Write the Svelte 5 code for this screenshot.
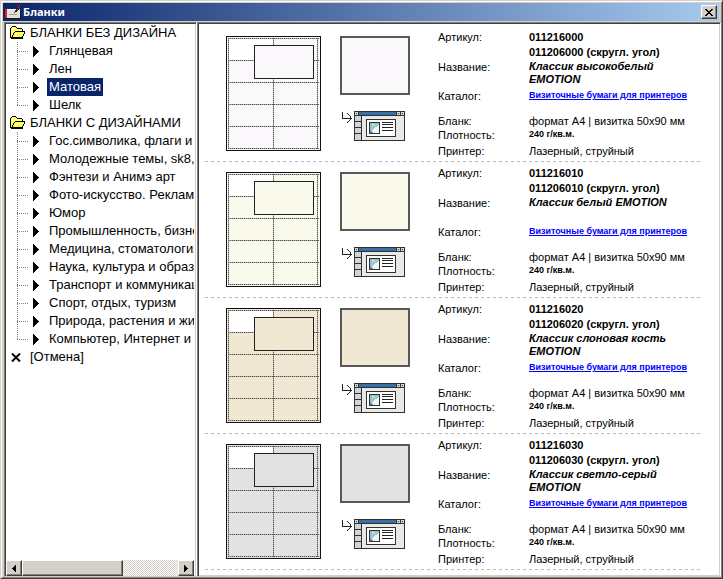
<script>
  const groups = [
    { title: 'БЛАНКИ БЕЗ ДИЗАЙНА', items: ['Глянцевая', 'Лен', 'Матовая', 'Шелк'] },
    {
      title: 'БЛАНКИ С ДИЗАЙНАМИ',
      items: [
        'Гос.символика, флаги и',
        'Молодежные темы, sk8,',
        'Фэнтези и Анимэ арт',
        'Фото-искусство. Реклам',
        'Юмор',
        'Промышленность, бизне',
        'Медицина, стоматология',
        'Наука, культура и образ',
        'Транспорт и коммуникац',
        'Спорт, отдых, туризм',
        'Природа, растения и жи',
        'Компьютер, Интернет и I'
      ]
    }
  ];
  let selected = $state('Матовая');

  const papers = [
    { code: '011216000', round: '011206000', name: 'Классик высокобелый EMOTION', color: '#faf8fa' },
    { code: '011216010', round: '011206010', name: 'Классик белый EMOTION', color: '#f9f9ec' },
    { code: '011216020', round: '011206020', name: 'Классик слоновая кость EMOTION', color: '#f0e8d2' },
    { code: '011216030', round: '011206030', name: 'Классик светло-серый EMOTION', color: '#e2e2e2' }
  ];
  const rowLines = [2, 24, 46, 68, 90, 112];
  const colLines = [3, 48, 92];
</script>

<div class="window">
  <header>
    <svg class="app" width="16" height="16" viewBox="0 0 16 16" shape-rendering="crispEdges">
      <path d="M2 5h13v9H2z" fill="#e4e0dc" />
      <path d="M2 5h12v1H2z" fill="#fff" />
      <path d="M1 14h14v1H1zM15 6h1v9h-1z" fill="#181818" />
      <path d="M0 5h2v9H0z" fill="#e81818" />
      <path d="M4 10h8v1H4z" fill="#a09c98" />
      <path d="M9 8h1V6h1V4h1V3h1V2h1V1h2v2h-1v2h-1v1h-1v1h-1v1h-2v1H9z" fill="#282020" />
      <path d="M14 1h1v1h-1zM13 3h1v1h-1zM12 5h1v1h-1z" fill="#d05050" />
    </svg>
    <h1>Бланки</h1>
    <button class="close" aria-label="Закрыть">
      <svg width="8" height="7" viewBox="0 0 8 7" shape-rendering="crispEdges">
        <path d="M0 0h2v1h1v1h2V1h1V0h2v1H7v1H6v1H5v1h1v1h1v1h1v1H6V6H5V5H3v1H2v1H0V6h1V5h1V4h1V3H2V2H1V1H0z" />
      </svg>
    </button>
  </header>

  <div class="panes">
    <nav class="pane side">
      <div class="tree">
        {#each groups as group}
          <div class="row">
            <svg class="folder" width="16" height="14" viewBox="0 0 16 14" shape-rendering="crispEdges">
              <path d="M1 12V2h1V1h4v1h1v1h6v3h2v1h-1v2h-1v2h-1v1z" fill="#ffff50" />
              <path d="M2 2h3v1H2zM2 3h1v5H2zM5 7h8v1H5z" fill="#ffffd8" />
              <path d="M2 0h4v1H2zM1 1h1v1H1zM0 2h1v10H0zM6 1h1v1H6zM7 2h5v1H7zM12 3h1v2h-1zM5 5h10v1H5zM14 6h1v2h-1zM13 8h1v2h-1zM12 10h1v2h-1zM0 11h13v2H1v-1H0zM4 6h1v1H4zM3 7h1v2H3zM2 9h1v2H2z" />
            </svg>
            <span>{group.title}</span>
          </div>
          <ul>
            {#each group.items as item}
              <li>
                <svg class="arrow" width="6" height="11" viewBox="0 0 6 11" shape-rendering="crispEdges">
                  <path d="M0 0h1v1h1v1h1v1h1v1h1v1h1v1H5v1H4v1H3v1H2v1H1v1H0z" />
                </svg>
                <button class:selected={selected === item} onclick={() => (selected = item)}>{item}</button>
              </li>
            {/each}
          </ul>
        {/each}
        <div class="row">
          <svg class="cross" width="10" height="9" viewBox="0 0 10 9">
            <path d="M1 0.5l8 8M9 0.5l-8 8" stroke="#000" stroke-width="2" />
          </svg>
          <button>[Отмена]</button>
        </div>
      </div>
      <div class="scroll">
        <button aria-label="Влево"><svg width="4" height="7" viewBox="0 0 4 7" shape-rendering="crispEdges"><path d="M3 0h1v7H3V6H2V5H1V4H0V3h1V2h1V1h1z" /></svg></button>
        <div class="thumb"></div>
        <div class="track"></div>
        <button aria-label="Вправо"><svg width="4" height="7" viewBox="0 0 4 7" shape-rendering="crispEdges"><path d="M0 0h1v1h1v1h1v1h1v1H3v1H2v1H1v1H0z" /></svg></button>
      </div>
    </nav>

    <main class="pane">
      {#each papers as paper}
        <article>
          <svg class="sheet" width="95" height="115" viewBox="0 0 95 115">
            <rect x="0.5" y="0.5" width="94" height="114" fill={paper.color} stroke="#111" />
            <rect x="3" y="3" width="44" height="21" fill="#fff" />
            <g fill="none" stroke="#aaa">
              {#each rowLines as y}<path d="M2 {y + 0.5}H93" />{/each}
              {#each colLines as x}<path d="M{x - 0.5} 2V113" />{/each}
            </g>
            <g fill="none" stroke="#555" stroke-dasharray="1 1">
              {#each rowLines as y}<path d="M2 {y + 0.5}H93" />{/each}
              {#each colLines as x}<path d="M{x - 0.5} 2V113" />{/each}
            </g>
            <rect x="28.5" y="9.5" width="59" height="33" fill={paper.color} stroke="#222" />
          </svg>
          <div class="views">
            <div class="swatch" style:background={paper.color}></div>
            <svg width="70" height="31" viewBox="0 0 70 31" shape-rendering="crispEdges">
              <path d="M2 1h1v6h7v1H2zM7 2h1v1H7zM8 3h1v1H8zM9 4h1v1H9zM10 5h1v1h-1zM11 7h1v1h-1zM10 6h1v3h-1zM9 9h1v1H9zM8 10h1v1H8zM7 11h1v1H7z" fill="#222" />
              <path d="M14 0h51v30H14z" fill="#303030" />
              <path d="M22 5h42v24H22z" fill="#e8e8e6" />
              <path d="M15 1h3v3h-3zM57 1h3v3h-3zM61 1h3v3h-3z" fill="#e0dcd4" />
              <path d="M16 2h1v1h-1zM58 2h1v1h-1zM62 2h1v1h-1z" fill="#222" />
              <path d="M19 1h37v3H19z" fill="#3a6ea5" />
              <path d="M15 5h6v5h-6zM15 11h6v5h-6zM15 17h6v5h-6zM15 23h6v6h-6z" fill="#d4d4d4" />
              <path d="M26 8h30v18H26z" fill="#303030" />
              <path d="M27 9h28v16H27z" fill="#fff" />
              <path d="M29 11h11v12H29z" fill="#303030" />
              <path d="M30 12h9v10h-9z" fill="#8cc6ec" />
              <path d="M39 14v8h-9v-1h1v-1h1v-1h1v-1h1v-1h1v-1h2v-1h1v-1z" fill="#f4f4f4" />
              <path d="M32 13h3v2h-3z" fill="#f6e820" />
              <path d="M30 19h1v1h1v1h1v1h-3z" fill="#888" />
              <path d="M42 11h11v1H42zM42 13h11v1H42zM42 16h11v1H42zM42 19h11v1H42z" fill="#222" />
            </svg>
          </div>
          <dl>
            <dt>Артикул:</dt>
            <dd class="code">{paper.code}<br />{paper.round} (скругл. угол)</dd>
            <dt>Название:</dt>
            <dd class="name">{paper.name}</dd>
            <dt>Каталог:</dt>
            <dd><a href="#catalog">Визиточные бумаги для принтеров</a></dd>
            <dt>Бланк:</dt>
            <dd>формат А4 | визитка 50x90 мм</dd>
            <dt>Плотность:</dt>
            <dd class="weight">240 г/кв.м.</dd>
            <dt>Принтер:</dt>
            <dd>Лазерный, струйный</dd>
          </dl>
        </article>
      {/each}
    </main>
  </div>
</div>

<style>
  :global(body) {
    margin: 0;
  }
  .window {
    box-sizing: border-box;
    height: 100vh;
    display: flex;
    flex-direction: column;
    padding: 2px 1px 1px 2px;
    background: #d4d0c8;
    border: 1px solid;
    border-color: #d4d0c8 #404040 #404040 #d4d0c8;
    box-shadow: inset 1px 1px #fff, inset -1px -1px #808080;
    font-family: 'Liberation Sans', Arial, sans-serif;
    color: #000;
  }
  button {
    margin: 0;
    padding: 0;
    border: 0;
    background: none;
    color: inherit;
    font: inherit;
  }
  header {
    flex: none;
    display: flex;
    align-items: center;
    height: 18px;
    margin-right: 2px;
    padding: 0 2px;
    background: linear-gradient(90deg, #0a246a, #a6caf0);
  }
  h1 {
    flex: 1;
    margin: 0 0 0 2px;
    font: bold 11px 'Noto Sans', Tahoma, sans-serif;
    line-height: 16px;
    color: #fff;
  }
  .close,
  .scroll button,
  .thumb {
    box-sizing: border-box;
    background: #d4d0c8;
    border: 1px solid;
    border-color: #fff #404040 #404040 #fff;
    box-shadow: inset -1px -1px #808080;
  }
  .close {
    display: flex;
    align-items: center;
    justify-content: center;
    width: 16px;
    height: 14px;
  }
  .panes {
    flex: 1;
    min-height: 0;
    display: flex;
    padding: 1px 0 0 1px;
  }
  .pane {
    flex: 1;
    min-width: 0;
    box-sizing: border-box;
    background: #fff;
    border: 1px solid;
    border-color: #808080 #fff #d4d0c8 #808080;
    box-shadow: inset 1px 1px #404040, inset -1px -1px #d4d0c8;
    overflow: hidden;
  }
  .side {
    flex: 0 0 193px;
    display: flex;
    flex-direction: column;
    padding: 1px 2px 0 1px;
    font-size: 13px;
    line-height: 18px;
  }
  .tree {
    flex: 1;
    min-height: 0;
    overflow: hidden;
    white-space: nowrap;
  }
  .row {
    display: flex;
    align-items: center;
    height: 18px;
    padding-left: 4px;
  }
  .folder {
    margin-right: 4px;
  }
  .cross {
    margin: 0 9px 0 1px;
  }
  ul {
    margin: 0;
    padding: 0 0 0 11px;
    list-style: none;
  }
  li {
    display: flex;
    align-items: center;
    height: 18px;
    background:
      repeating-linear-gradient(90deg, #808080 0 1px, transparent 1px 2px) 0 9px / 11px 1px no-repeat,
      repeating-linear-gradient(#808080 0 1px, transparent 1px 2px) 0 0 / 1px 18px no-repeat;
  }
  li:last-child {
    background-size: 11px 1px, 1px 10px;
  }
  .arrow {
    flex: none;
    margin: 0 8px 0 16px;
  }
  li button {
    height: 18px;
    padding: 0 2px;
  }
  .selected {
    background: #0a246a;
    color: #fff;
  }
  .scroll {
    flex: none;
    display: flex;
    height: 16px;
  }
  .scroll button {
    flex: none;
    width: 16px;
    display: flex;
    align-items: center;
    justify-content: center;
  }
  .thumb {
    width: 101px;
  }
  .track {
    flex: 1;
    background: repeating-conic-gradient(#d4d0c8 0 25%, #fff 0 50%) 0 0 / 2px 2px;
  }
  main.pane {
    padding: 3px 20px 0 7px;
    font-size: 11px;
  }
  article {
    box-sizing: border-box;
    display: flex;
    height: 136px;
    padding-left: 21px;
    background: repeating-linear-gradient(90deg, #bbb 0 3px, transparent 3px 6px) 0 100% / 100% 1px no-repeat;
  }
  .sheet {
    flex: none;
    margin-top: 10px;
  }
  .views {
    flex: none;
    display: flex;
    flex-direction: column;
    gap: 16px;
    width: 70px;
    margin: 10px 28px 0 19px;
  }
  .swatch {
    box-sizing: border-box;
    height: 59px;
    border: 2px solid #58585a;
  }
  dl {
    flex: 1;
    display: grid;
    grid-template: 30px 29px 25px 14px 16px 14px / 91px 1fr;
    margin: 4px 0 0;
    line-height: 14px;
  }
  dt,
  dd {
    margin: 0;
  }
  .code,
  .name {
    font-weight: bold;
  }
  .code {
    line-height: 15px;
  }
  .name {
    max-width: 150px;
    line-height: 13px;
    font-style: italic;
  }
  a,
  .weight {
    font-size: 9px;
    font-weight: bold;
    line-height: 13px;
  }
  dd a {
    display: block;
    color: #00f;
  }
</style>
